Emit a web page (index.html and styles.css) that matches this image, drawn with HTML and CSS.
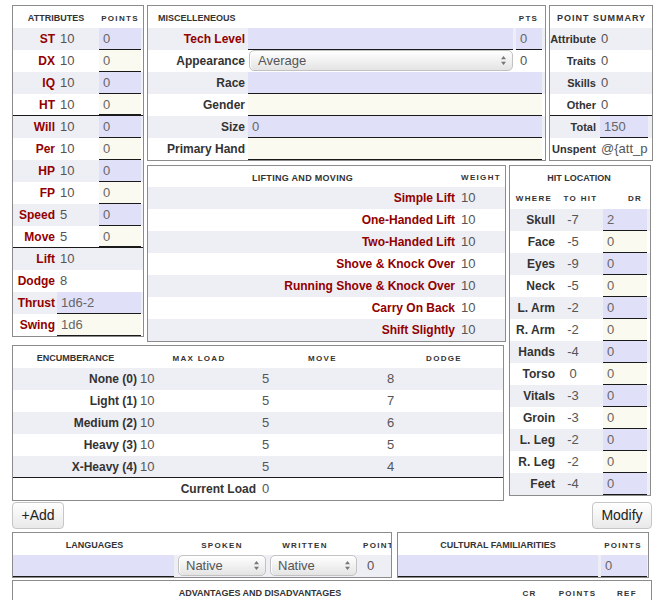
FILE: index.html
```html
<!DOCTYPE html>
<html>
<head>
<meta charset="utf-8">
<title>Character Sheet</title>
<link rel="stylesheet" href="styles.css">
</head>
<body>
<div class="sheet">
  <section class="panel attrs">
    <div class="row head"><div class="hd c12">ATTRIBUTES</div><div class="hd sp">POINTS</div></div>
    <div class="row odd"><div class="lbl red">ST</div><div class="val">10</div><div class="inp">0</div></div>
    <div class="row"><div class="lbl red">DX</div><div class="val">10</div><div class="inp">0</div></div>
    <div class="row odd"><div class="lbl red">IQ</div><div class="val">10</div><div class="inp">0</div></div>
    <div class="row sep"><div class="lbl red">HT</div><div class="val">10</div><div class="inp">0</div></div>
    <div class="row odd"><div class="lbl red">Will</div><div class="val">10</div><div class="inp">0</div></div>
    <div class="row"><div class="lbl red">Per</div><div class="val">10</div><div class="inp">0</div></div>
    <div class="row odd"><div class="lbl red">HP</div><div class="val">10</div><div class="inp">0</div></div>
    <div class="row"><div class="lbl red">FP</div><div class="val">10</div><div class="inp">0</div></div>
    <div class="row odd"><div class="lbl red">Speed</div><div class="val">5</div><div class="inp">0</div></div>
    <div class="row sep"><div class="lbl red">Move</div><div class="val">5</div><div class="inp">0</div></div>
    <div class="row odd"><div class="lbl red">Lift</div><div class="val">10</div></div>
    <div class="row"><div class="lbl red">Dodge</div><div class="val">8</div></div>
    <div class="row odd"><div class="lbl red">Thrust</div><div class="inp wide">1d6-2</div></div>
    <div class="row"><div class="lbl red">Swing</div><div class="inp wide">1d6</div></div>
  </section>

  <section class="panel misc">
    <div class="row head"><div class="hd left">MISCELLENEOUS</div><div class="hd sp">PTS</div></div>
    <div class="row odd"><div class="lbl red">Tech Level</div><div class="inp"></div><div class="inp pts">0</div></div>
    <div class="row"><div class="lbl">Appearance</div>
      <div class="select appear"><span>Average</span>
        <svg class="arr" width="7" height="11" viewBox="0 0 7 11"><path d="M3.5 1 L6 4.3 H1 Z M3.5 10 L6 6.7 H1 Z" fill="#777"/></svg>
      </div>
      <div class="val ptsval">0</div></div>
    <div class="row odd"><div class="lbl">Race</div><div class="inp long"></div></div>
    <div class="row"><div class="lbl">Gender</div><div class="inp long"></div></div>
    <div class="row odd"><div class="lbl">Size</div><div class="inp long">0</div></div>
    <div class="row"><div class="lbl">Primary Hand</div><div class="inp long"></div></div>
  </section>

  <section class="panel ps">
    <div class="row head"><div class="hd c12 wide-hd">POINT SUMMARY</div></div>
    <div class="row odd"><div class="lbl">Attribute</div><div class="val">0</div></div>
    <div class="row"><div class="lbl">Traits</div><div class="val">0</div></div>
    <div class="row odd"><div class="lbl">Skills</div><div class="val">0</div></div>
    <div class="row sep"><div class="lbl">Other</div><div class="val">0</div></div>
    <div class="row odd"><div class="lbl">Total</div><div class="inp">150</div></div>
    <div class="row"><div class="lbl">Unspent</div><div class="val clip">@{att_points_unspent}</div></div>
  </section>

  <section class="panel lift">
    <div class="row head"><div class="hd lm">LIFTING AND MOVING</div><div class="hd sp">WEIGHT</div></div>
    <div class="row odd"><div class="lbl red">Simple Lift</div><div class="val">10</div></div>
    <div class="row"><div class="lbl red">One-Handed Lift</div><div class="val">10</div></div>
    <div class="row odd"><div class="lbl red">Two-Handed Lift</div><div class="val">10</div></div>
    <div class="row"><div class="lbl red">Shove &amp; Knock Over</div><div class="val">10</div></div>
    <div class="row odd"><div class="lbl red">Running Shove &amp; Knock Over</div><div class="val">10</div></div>
    <div class="row"><div class="lbl red">Carry On Back</div><div class="val">10</div></div>
    <div class="row odd"><div class="lbl red">Shift Slightly</div><div class="val">10</div></div>
  </section>

  <section class="panel hit">
    <div class="row head"><div class="hd c13">HIT LOCATION</div></div>
    <div class="row sub"><div class="hd sp">WHERE</div><div class="hd sp">TO HIT</div><div class="hd sp dr">DR</div></div>
    <div class="row odd"><div class="lbl">Skull</div><div class="val th">-7</div><div class="inp">2</div></div>
    <div class="row"><div class="lbl">Face</div><div class="val th">-5</div><div class="inp">0</div></div>
    <div class="row odd"><div class="lbl">Eyes</div><div class="val th">-9</div><div class="inp">0</div></div>
    <div class="row"><div class="lbl">Neck</div><div class="val th">-5</div><div class="inp">0</div></div>
    <div class="row odd"><div class="lbl">L. Arm</div><div class="val th">-2</div><div class="inp">0</div></div>
    <div class="row"><div class="lbl">R. Arm</div><div class="val th">-2</div><div class="inp">0</div></div>
    <div class="row odd"><div class="lbl">Hands</div><div class="val th">-4</div><div class="inp">0</div></div>
    <div class="row"><div class="lbl">Torso</div><div class="val th">0</div><div class="inp">0</div></div>
    <div class="row odd"><div class="lbl">Vitals</div><div class="val th">-3</div><div class="inp">0</div></div>
    <div class="row"><div class="lbl">Groin</div><div class="val th">-3</div><div class="inp">0</div></div>
    <div class="row odd"><div class="lbl">L. Leg</div><div class="val th">-2</div><div class="inp">0</div></div>
    <div class="row"><div class="lbl">R. Leg</div><div class="val th">-2</div><div class="inp">0</div></div>
    <div class="row odd"><div class="lbl">Feet</div><div class="val th">-4</div><div class="inp">0</div></div>
  </section>

  <section class="panel enc">
    <div class="row head"><div class="hd">ENCUMBERANCE</div><div class="hd sp">MAX LOAD</div><div class="hd sp">MOVE</div><div class="hd sp">DODGE</div></div>
    <div class="row odd"><div class="lbl">None (0)</div><div class="val">10</div><div class="val">5</div><div class="val">8</div></div>
    <div class="row"><div class="lbl">Light (1)</div><div class="val">10</div><div class="val">5</div><div class="val">7</div></div>
    <div class="row odd"><div class="lbl">Medium (2)</div><div class="val">10</div><div class="val">5</div><div class="val">6</div></div>
    <div class="row"><div class="lbl">Heavy (3)</div><div class="val">10</div><div class="val">5</div><div class="val">5</div></div>
    <div class="row odd sep"><div class="lbl">X-Heavy (4)</div><div class="val">10</div><div class="val">5</div><div class="val">4</div></div>
    <div class="row"><div class="lbl cl">Current Load</div><div class="val">0</div></div>
  </section>
</div>

<div class="btns">
  <div class="btn add">+Add</div>
  <div class="btn modify">Modify</div>
</div>

<div class="bottom">
  <section class="panel lang">
    <div class="row head"><div class="hd">LANGUAGES</div><div class="hd sp">SPOKEN</div><div class="hd sp">WRITTEN</div><div class="hd sp pt">POINTS</div></div>
    <div class="row odd">
      <div class="inp"></div>
      <div class="select"><span>Native</span><svg class="arr" width="7" height="11" viewBox="0 0 7 11"><path d="M3.5 1 L6 4.3 H1 Z M3.5 10 L6 6.7 H1 Z" fill="#777"/></svg></div>
      <div class="select"><span>Native</span><svg class="arr" width="7" height="11" viewBox="0 0 7 11"><path d="M3.5 1 L6 4.3 H1 Z M3.5 10 L6 6.7 H1 Z" fill="#777"/></svg></div>
      <div class="val lp">0</div>
    </div>
  </section>
  <section class="panel cult">
    <div class="row head"><div class="hd">CULTURAL FAMILIARITIES</div><div class="hd sp">POINTS</div></div>
    <div class="row odd"><div class="inp"></div><div class="inp cp">0</div></div>
  </section>
</div>

<section class="panel adv">
  <div class="row head"><div class="hd">ADVANTAGES AND DISADVANTAGES</div><div class="hd sp">CR</div><div class="hd sp">POINTS</div><div class="hd sp">REF</div></div>
  <div class="row odd"></div>
</section>
</body>
</html>
```

FILE: styles.css
```css
html, body {
  margin: 0;
  background: #fff;
}
body {
  padding: 5px 0 0 12px;
  font-family: "Liberation Sans", Arial, Helvetica, sans-serif;
  color: #333;
  width: 653px;
  overflow: hidden;
}

.sheet {
  display: grid;
  grid-template-columns: 132px 359px 37px 104px;
  column-gap: 3px;
  align-items: start;
  width: 641px;
}

.panel {
  border: 1px solid #8c8c8c;
  background: #fff;
  box-sizing: border-box;
}

.attrs { grid-column: 1; grid-row: 1 / 3; }
.misc  { grid-column: 2 / 4; grid-row: 1; }
.ps    { grid-column: 4; grid-row: 1; }
.lift  { grid-column: 2; grid-row: 2; margin-top: 4px; }
.hit   { grid-column: 3 / 5; grid-row: 2 / 4; margin-top: 4px; width: 142px; }
.enc   { grid-column: 1 / 3; grid-row: 3; margin-top: 3px; width: 492px; }

.row {
  display: grid;
  height: 22px;
  box-sizing: border-box;
}
.row > * {
  line-height: 22px;
  white-space: nowrap;
  overflow: hidden;
}
.odd { background: #eeeef5; }
.sep { border-bottom: 1px solid #1a1a1a; }

.hd {
  font-size: 9px;
  font-weight: bold;
  color: #333;
  text-align: center;
}
.row.head > .hd { line-height: 25px; }
.hd.sp {
  font-size: 8px;
  letter-spacing: 1.3px;
}
.hd.left {
  text-align: left;
  padding-left: 10px;
}

.lbl {
  text-align: right;
  font-weight: bold;
  font-size: 12px;
  padding-right: 2px;
  color: #333;
}
.lbl.red { color: #920000; }

.val {
  font-size: 13px;
  color: #555;
  padding-left: 3px;
}

.inp {
  font-size: 13px;
  color: #666;
  background: #fafaf0;
  border-bottom: 1px solid #1a1a1a;
  padding-left: 4px;
  line-height: 21px !important;
  box-sizing: border-box;
}
.odd .inp { background: #e0e0f8; }

/* select look-alike */
.select {
  display: flex;
  align-items: center;
  justify-content: space-between;
  height: 21px;
  box-sizing: border-box;
  border: 1px solid #c2c2c2;
  border-radius: 5px;
  background: linear-gradient(#ffffff, #f1f1f1 50%, #e4e4e4);
  box-shadow: inset 1px 0 0 #fff;
  font-size: 13px;
  color: #555;
  padding: 0 5px 0 7px;
  line-height: 19px !important;
}
.select .arr { flex: none; }

/* attributes */
.attrs .row { grid-template-columns: 44px 42px 42px; }
.attrs .c12 { grid-column: 1 / 3; }
.attrs .inp.wide { grid-column: 2 / 4; }

/* misc */
.misc .row { grid-template-columns: 100px 265px 31px; }
.misc .hd.left { grid-column: 1 / 3; }
.misc .lbl { padding-right: 3px; }
.misc .inp.pts { margin: 0 2px 0 3px; }
.misc .inp.long { grid-column: 2 / 4; margin-right: 2px; }
.misc .select.appear { margin-left: 1px; padding-left: 8px; }
.misc .ptsval { padding-left: 7px; }

/* point summary */
.ps .row { grid-template-columns: 48px 54px; }
.ps .c12 { grid-column: 1 / 3; }
.ps .wide-hd { letter-spacing: 1px; padding-left: 1px; }
.ps .lbl { font-size: 11px; padding-right: 2px; }
.ps .inp { margin: 0 4px 0 2px; }
.ps .clip { margin-right: 4px; text-overflow: clip; }

/* lifting */
.lift .row { grid-template-columns: 309px 48px; }
.lift .head { height: 21px; }
.lift .row.head > * { line-height: 24px; }
.lift .hd.lm { letter-spacing: 0.3px; }
.lift .val { padding-left: 4px; }

/* hit location */
.hit .row { grid-template-columns: 48px 45px 44px; }
.hit .head { height: 21px; }
.hit .row.head > * { line-height: 24px; }
.hit .row.sub > * { line-height: 24px; }
.hit .c13 { grid-column: 1 / 4; padding-left: 1px; }
.hit .lbl { padding-right: 3px; }
.hit .th { text-align: center; padding: 0 15px 0 0; }
.hit .hd.dr { padding-left: 20px; }

/* encumbrance */
.enc .row { grid-template-columns: 125px 122px 125px 1fr; }
.enc .lbl { padding-right: 1px; }
.enc .val { padding-left: 2px; }
.enc .lbl.cl { grid-column: 1 / 3; padding-right: 4px; }

/* buttons */
.btns {
  display: flex;
  justify-content: space-between;
  width: 640px;
  margin-top: 1px;
}
.btn {
  height: 27px;
  box-sizing: border-box;
  border: 1px solid #c6c6c6;
  border-radius: 4px;
  background: linear-gradient(#ffffff, #f4f4f4 50%, #e9e9e9);
  font-size: 14px;
  color: #222;
  line-height: 25px;
  text-align: center;
}
.btn.add { width: 52px; }
.btn.modify { width: 60px; }

/* bottom panels */
.bottom {
  display: flex;
  gap: 5px;
  margin-top: 3px;
}
.lang { width: 380px; }
.lang .head { grid-template-columns: 163px 92px 74px 1fr; }
.lang .hd.pt { text-align: left; padding-left: 21px; }
.lang .odd { grid-template-columns: 161px 92px 91px 1fr; }
.lang .select { margin-left: 4px; margin-top: 0; }
.lang .lp { padding-left: 10px; }

.cult { width: 252px; }
.cult .row { grid-template-columns: 200px 1fr; }
.cult .cp { margin: 0 1px 0 3px; }

.adv {
  width: 640px;
  margin-top: 2px;
  height: 60px;
}
.adv .row { grid-template-columns: 494px 45px 51px 1fr; }
```
